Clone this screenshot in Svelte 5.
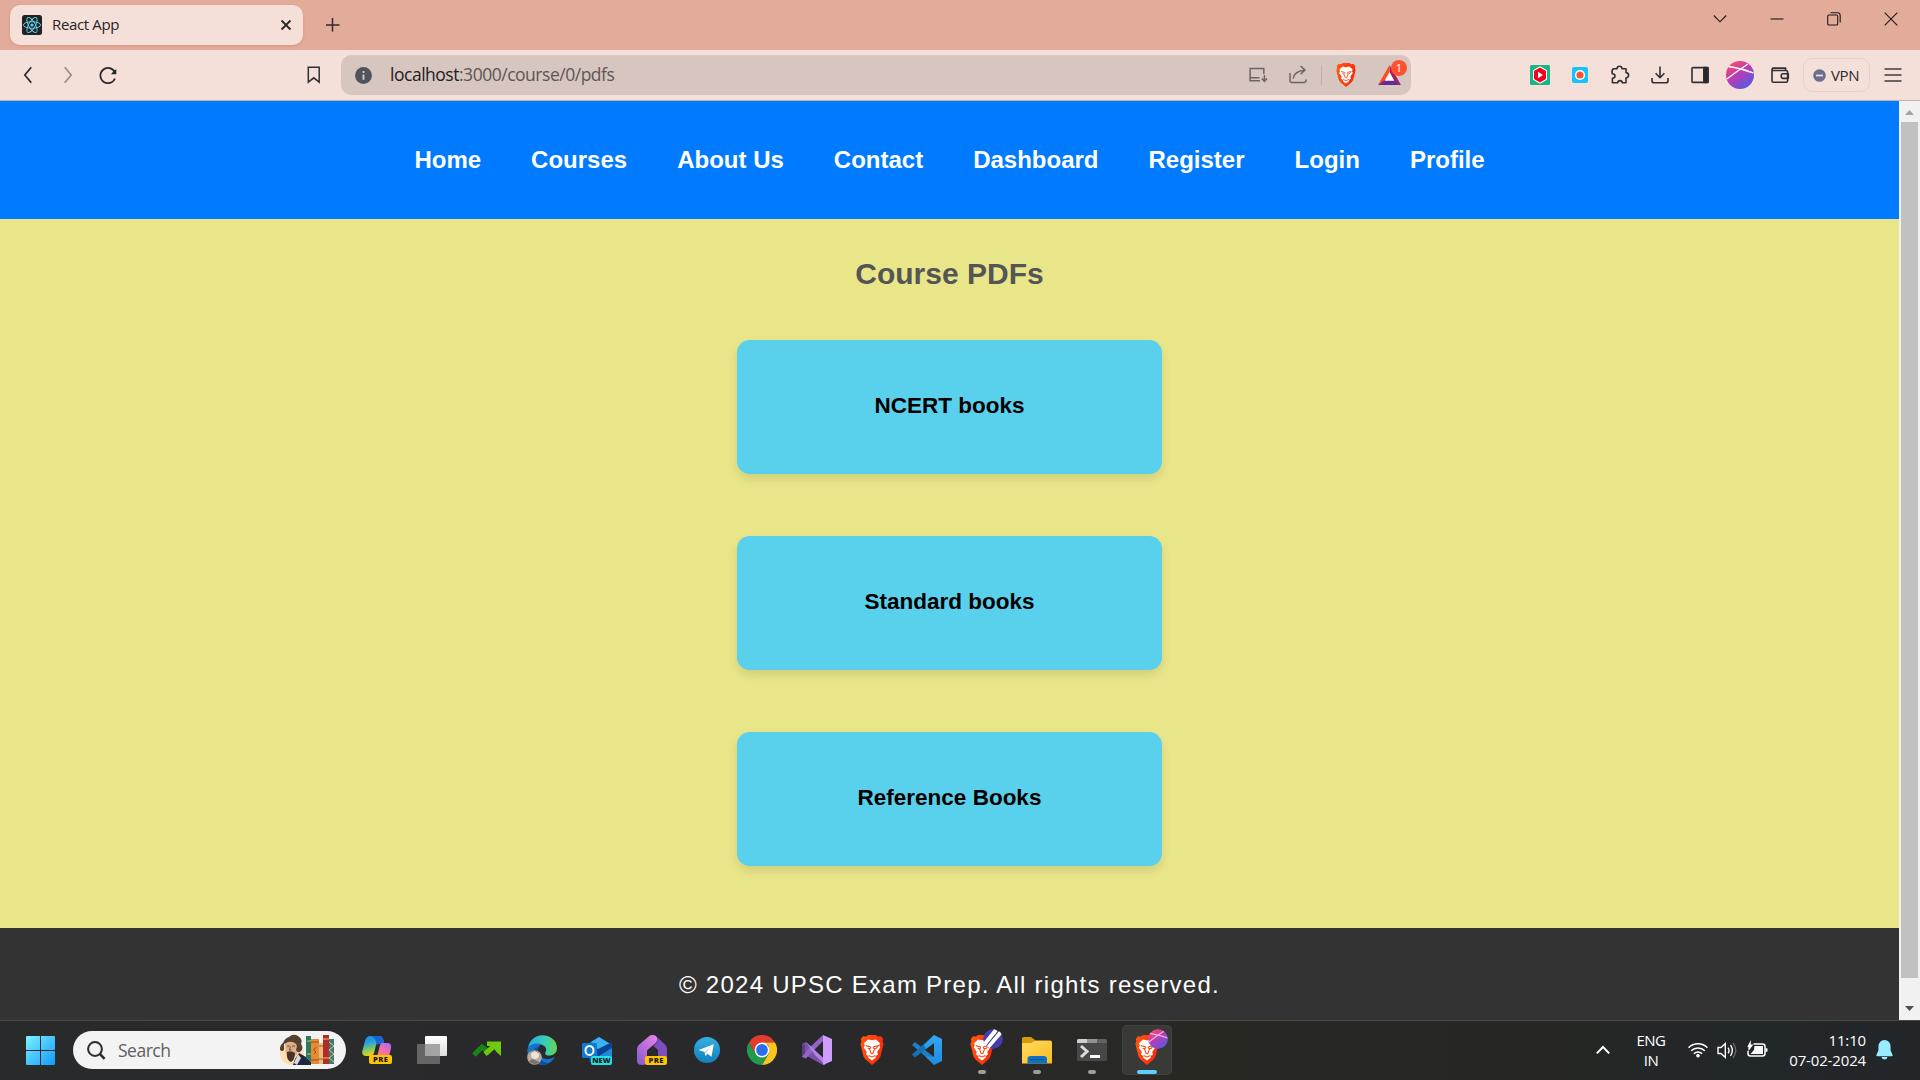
<script lang="ts">
  const links = ['Home', 'Courses', 'About Us', 'Contact', 'Dashboard', 'Register', 'Login', 'Profile'];
  const books = ['NCERT books', 'Standard books', 'Reference Books'];
</script>

{#snippet lion()}
  <path d="M6 1.5 8 0H16L18 1.5 21 1.2 23.2 4 22.6 6.5 23.6 9 20.5 21.5 18.5 24.5 12 30 5.5 24.5 3.5 21.5.4 9 1.4 6.5.8 4 3 1.2Z" fill="url(#lionFill)" />
  <path d="M12 5.2 16 4.5 20 8.2 19.2 10.2 20.2 12.5 17.2 17 18 19.6 15.4 21.2 16 22.6 12 25.6 8 22.6 8.6 21.2 6 19.6 6.8 17 3.8 12.5 4.8 10.2 4 8.2 8 4.5Z" fill="#fff" />
  <path d="M5.8 10.6 10.2 11.8 10.6 12.8 9.6 14.2 10.8 18 12 18.8 13.2 18 14.4 14.2 13.4 12.8 13.8 11.8 18.2 10.6 16.4 13.2 14.6 13.6 M8.6 20.6 12 22 15.4 20.6 M7.6 13.2 9.4 13.6" fill="none" stroke="#fb4b16" stroke-width="1.1" />
{/snippet}

<svg class="defs" width="0" height="0" aria-hidden="true">
  <defs>
    <linearGradient id="lionFill" x2="1" y2=".3"><stop stop-color="#ff5a10" /><stop offset="1" stop-color="#f92b0b" /></linearGradient>
    <linearGradient id="orb" x1=".1" y1="0" x2=".8" y2="1"><stop stop-color="#ff5055" /><stop offset=".45" stop-color="#c13ab6" /><stop offset="1" stop-color="#4a5ee0" /></linearGradient>
    <linearGradient id="win" x2="1" y2="1"><stop stop-color="#7df3ff" /><stop offset="1" stop-color="#1098fb" /></linearGradient>
    <linearGradient id="copA" x2=".3" y2="1"><stop stop-color="#1b86ea" /><stop offset=".4" stop-color="#2aa3d8" /><stop offset=".75" stop-color="#8fd04c" /><stop offset="1" stop-color="#f4c921" /></linearGradient>
    <linearGradient id="copB" x1="1" x2=".2" y2="1"><stop stop-color="#a66bf5" /><stop offset=".5" stop-color="#ef6bb4" /><stop offset="1" stop-color="#ff8d53" /></linearGradient>
    <linearGradient id="edge" x1="0" x2="1"><stop stop-color="#25a9e2" /><stop offset=".6" stop-color="#38cdb8" /><stop offset="1" stop-color="#67d84a" /></linearGradient>
    <linearGradient id="home" x1="1" y1="0" x2=".2" y2="1"><stop stop-color="#e983ea" /><stop offset="1" stop-color="#8f5bd0" /></linearGradient>
    <linearGradient id="tele" x2="0" y2="1"><stop stop-color="#37aee2" /><stop offset="1" stop-color="#1180bd" /></linearGradient>
    <linearGradient id="folder" x2="1" y2="1"><stop stop-color="#ffdc62" /><stop offset="1" stop-color="#fcba1e" /></linearGradient>
    <linearGradient id="pane" x2="0" y2="1"><stop stop-color="#fff" /><stop offset="1" stop-color="#ddd" /></linearGradient>
    <linearGradient id="code" x2="0" y2="1"><stop stop-color="#33a9f2" /><stop offset="1" stop-color="#1c8ce0" /></linearGradient>
  </defs>
</svg>

<div class="screen">
  <div class="tabstrip">
    <div class="tab">
      <svg class="favicon" width="20" height="20" viewBox="0 0 20 20">
        <rect width="20" height="20" rx="2.5" fill="#222" />
        <g fill="none" stroke="#5fd3f3" stroke-width=".9">
          <ellipse cx="10" cy="10" rx="8.6" ry="3.3" />
          <ellipse cx="10" cy="10" rx="8.6" ry="3.3" transform="rotate(60 10 10)" />
          <ellipse cx="10" cy="10" rx="8.6" ry="3.3" transform="rotate(120 10 10)" />
        </g>
        <circle cx="10" cy="10" r="1.6" fill="#5fd3f3" />
      </svg>
      <span class="tabname">React App</span>
      <svg class="tabclose" width="12" height="12" viewBox="0 0 12 12" fill="none" stroke="#2b2526" stroke-width="1.8"><path d="M1.5 1.5 10.5 10.5M10.5 1.5 1.5 10.5" /></svg>
    </div>
    <svg class="plus" width="14" height="14" viewBox="0 0 14 14" fill="none" stroke="#33282a" stroke-width="1.5"><path d="M6.5 0V13.5M0 7H13.5" /></svg>
    <div class="wincontrols">
      <span><svg width="14" height="14" viewBox="0 0 14 14"><path d="M.8 3.5 7 9.8 13.2 3.5" /></svg></span>
      <span><svg width="14" height="14" viewBox="0 0 14 14"><path d="M.5 7H13.5" /></svg></span>
      <span><svg width="14" height="14" viewBox="0 0 14 14"><path d="M1 3H9.5Q10.7 3 10.7 4.2V12Q10.7 13 9.5 13H2Q.7 13 .7 12V4Q.7 3 2 3ZM3.5.7H10.5Q13.2.7 13.2 3.5V10.5" /></svg></span>
      <span><svg width="14" height="14" viewBox="0 0 14 14"><path d="M.7.7 13.3 13.3M13.3.7.7 13.3" /></svg></span>
    </div>
  </div>

  <div class="toolbar">
    <div class="navbuttons">
      <span><svg width="20" height="20" viewBox="0 0 20 20"><path d="M13.3 2.2 6.8 10 13.3 17.8" /></svg></span>
      <span class="dim"><svg width="20" height="20" viewBox="0 0 20 20"><path d="M6.7 2.2 13.2 10 6.7 17.8" /></svg></span>
      <span><svg width="20" height="20" viewBox="0 0 20 20"><path d="M16.8 7.2A7.6 7.6 0 1 0 17 13.5" /><path d="M18.3 4.2V9.2H13Q14.4 6 18.3 4.2Z" fill="#28282a" stroke="none" /></svg></span>
    </div>
    <svg class="bookmark" width="14" height="18" viewBox="0 0 14 18" fill="none" stroke="#303034" stroke-width="1.5"><path d="M1.3 1.2H12.2V16.2L6.8 11.8 1.3 16.2Z" /></svg>
    <div class="address">
      <svg class="info" width="17" height="17" viewBox="0 0 17 17"><circle cx="8.5" cy="8.5" r="8.4" fill="#50535a" /><path d="M8.5 7.4V12.8M8.5 4V6" stroke="#d8c7c0" stroke-width="1.9" /></svg>
      <span class="url">localhost<i>:3000/course/0/pdfs</i></span>
      <div class="addricons">
        <svg width="20" height="20" viewBox="0 0 20 20" fill="none" stroke="#6b6665" stroke-width="1.5"><path d="M15.8 9V3.6H2.1V15.7H12M2.1 12.8H11.5M16.4 10V16M13.8 13.6 16.4 16.3 19 13.6" /></svg>
        <svg width="20" height="20" viewBox="0 0 20 20" fill="none" stroke="#6b6665" stroke-width="1.5"><path d="M2 8V15.4Q2 17.4 4 17.4H16Q18 17.4 18 15.4V14.4M5.2 13.6Q6 6.2 16.6 5.2M12.6 1 17 5.1 12.6 9.2" /></svg>
        <b></b>
        <svg width="20" height="24" viewBox="0 0 24 30" preserveAspectRatio="none">{@render lion()}</svg>
        <div class="bat">
          <svg width="23" height="20" viewBox="0 0 23 20"><path d="M11.5 0 0 20 11.5 13Z" fill="#ff4b1f" /><path d="M11.5 0 23 20 12 13Z" fill="#a32069" /><path d="M0 20H23L16 15H7Z" fill="#662d91" /><path d="M11.5 7 6.7 15.8H16.3Z" fill="#fff" /></svg>
          <em>1</em>
        </div>
      </div>
    </div>
    <div class="extensions">
      <span><svg width="20" height="20" viewBox="0 0 20 20"><rect width="20" height="20" rx="1.5" fill="#18b589" /><path d="M10 1.2 17 5.2V14.8L10 18.8 3 14.8V5.2Z" fill="#fff" /><path d="M10 2.5 16 6V14L10 17.5 4 14V6Z" fill="#f4001d" /><path d="M8 6.8 13 10 8 13.2Z" fill="#fff" /></svg></span>
      <span><svg width="16" height="16" viewBox="0 0 16 16"><rect width="16" height="16" rx="2" fill="#14c4fa" /><circle cx="8" cy="8" r="5.1" fill="#fff" /><circle cx="8" cy="8" r="3.6" fill="#fa5138" /></svg></span>
      <span><svg class="line" width="20" height="20" viewBox="0 0 20 20"><path d="M3.4 3.8H6.9Q7.2 1.2 9.5 1.2T12.1 3.8H16V7.6Q18.6 8 18.6 10.2T16 13V17.8H12.4Q12 15.6 10 15.6T7.6 17.8H2.4V13.3Q5 13 5 10.9T2.2 8.7Q1.4 5 3.4 3.8Z" /></svg></span>
      <span><svg class="line" width="20" height="20" viewBox="0 0 20 20"><path d="M10 1.5V12.5M5.6 8.3 10 12.7 14.4 8.3M2 13V15.8Q2 17.8 4 17.8H16Q18 17.8 18 15.8V13" /></svg></span>
      <span><svg class="line" width="20" height="20" viewBox="0 0 20 20"><rect x="2" y="2.6" width="16" height="14.8" rx="1" /><path d="M13.8 2.6H18V17.4H13.8Z" fill="#25272a" /></svg></span>
      <span><svg width="28" height="28" viewBox="0 0 28 28"><circle cx="14" cy="14" r="14" fill="url(#orb)" /><path d="M2.5 5.5Q14 7 27.5 12M.8 18Q12 9.3 22 3M14 7.8 23.5 11" fill="none" stroke="#fff" stroke-width="1.3" /><path d="M17 8 27 11.8" stroke="#fff" /></svg></span>
      <span><svg class="line" width="20" height="20" viewBox="0 0 20 20"><path d="M2 4.6V16Q2 17.2 3.4 17.2H16.2Q17.6 17.2 17.6 15.9V6.8Q17.6 5.5 16.2 5.5H3Q1.6 4.9 2.6 3.1H15.6V5.3M18.3 8.8H13Q11.2 8.8 11.2 11T13 13.4H18.3Z" /></svg></span>
    </div>
    <div class="vpn">
      <svg width="13" height="13" viewBox="0 0 13 13"><circle cx="6.5" cy="6.5" r="6.3" fill="#6b6f8e" /><path d="M3 6.5H10" stroke="#f5e0d9" stroke-width="1.7" /></svg>
      <span>VPN</span>
    </div>
    <svg class="menu" width="18" height="14" viewBox="0 0 18 14" fill="none" stroke="#403b3d" stroke-width="1.5"><path d="M.5 1H17.5M.5 7H17.5M.5 13H17.5" /></svg>
  </div>

  <div class="viewport">
    <div class="page">
      <nav>
        {#each links as link}<span>{link}</span>{/each}
      </nav>
      <main>
        <h2>Course PDFs</h2>
        {#each books as book}<div class="card">{book}</div>{/each}
      </main>
      <footer>© 2024 UPSC Exam Prep. All rights reserved.</footer>
    </div>
    <div class="scrollbar">
      <svg width="21" height="21" viewBox="0 0 21 21"><path d="M6 14 10.5 9 15 14Z" fill="#a3a3a3" /></svg>
      <div class="thumb"></div>
      <svg class="down" width="21" height="21" viewBox="0 0 21 21"><path d="M6 7 10.5 12 15 7Z" fill="#505050" /></svg>
    </div>
  </div>

  <div class="taskbar">
    <svg class="start" width="29" height="29" viewBox="0 0 29 29"><path d="M1 0H14V14H0V1Q0 0 1 0ZM15 0H28Q29 0 29 1V14H15ZM0 15H14V29H1Q0 29 0 28ZM15 15H29V28Q29 29 28 29H15Z" fill="url(#win)" /></svg>
    <div class="search">
      <svg width="19" height="19" viewBox="0 0 19 19" fill="none" stroke="#2c2c2c" stroke-width="2"><circle cx="8" cy="8" r="6.9" /><path d="M12.8 12.8 17.6 17.8" stroke-width="2.6" /></svg>
      <span>Search</span>
      <svg class="author" width="54" height="32" viewBox="0 0 54 32">
        <ellipse cx="12" cy="20" rx="12" ry="11" fill="#ffdfb0" />
        <path d="M13 31 15 25 19 19 26 23 31 28V31Z" fill="#20283c" />
        <path d="M14 29 18 20 21 24 17 31Z" fill="#d9d9de" />
        <path d="M5 9Q7 4 13 5 19 7 18 14L17 21 11 23 6 20Z" fill="#e2ae86" />
        <path d="M0 16Q-.5 11 3 9 5 4 9 3 13-1 18 2 23 5 21 10 24 14 21 17 18 20 16 16L17 12Q15 7 8 8L4 10 4 16Q2 18 0 16Z" fill="#554031" />
        <path d="M7 18Q11 16 15 19 15 26 11 28 6 26 7 18Z" fill="#46342a" />
        <path d="M7 12H9.5M12 12H15M10.5 12.5 9.5 16H11.5" stroke="#513522" stroke-width=".8" fill="none" />
        <path d="M26 2H31V28L26 24Z" fill="#267c63" /><path d="M27 7H31M27 20H31" stroke="#ddb65f" />
        <rect x="31" y="5" width="8" height="25" fill="#e58a35" /><path d="M31 8H39M31 26H39M36.5 13 33.5 16 36 18 34 20" fill="none" stroke="#9a4c18" />
        <rect x="39" y="9" width="4" height="21" fill="#e7bd78" /><path d="M39 12H43M39 25H43" stroke="#a95428" />
        <rect x="43" y="1" width="6" height="29" fill="#b32b26" /><path d="M43 5H49M43 24H49" stroke="#eebd52" />
        <rect x="49" y="5" width="5" height="25" fill="#3b7c78" /><path d="M49 8 54 12 49 16 54 20 49 24 54 28" fill="none" stroke="#dbc477" />
      </svg>
    </div>
    <div class="apps">
      <span><svg width="30" height="30" viewBox="0 0 30 30">
        <path d="M8 1H17Q20 1 21 4L22 7H18Q15 7 14 10L12 18Q11 21 8 21H4Q-1 21 .6 15L3 6Q4.5 1 8 1Z" fill="url(#copA)" />
        <path d="M9 1H17Q20 1 21 4L22.5 9H17L15 10Q13 2 9 1Z" fill="#1866d6" />
        <path d="M20 8H25Q30 8 29 13L27 22H12Q15 22 16 18L18 10Q18.6 8 20 8Z" fill="url(#copB)" />
        <rect x="7" y="20" width="23" height="9" rx="2" fill="#ffc400" /><text x="18.7" y="27.4" class="pre">PRE</text></svg></span>
      <span><svg width="30" height="30" viewBox="0 0 30 30"><rect x="8" y="1" width="22" height="20" rx="1" fill="url(#pane)" /><rect x="0" y="9" width="23" height="20" rx="1" fill="#707070" opacity=".86" /><path d="M8 9H23V21H8Z" fill="#a4a4a4" /></svg></span>
      <span><svg width="30" height="30" viewBox="0 0 30 30"><path d="M2 20 10 12 18 18" fill="none" stroke="#178517" stroke-width="5" /><path d="M13 19 24 9.5" stroke="#6ec60d" stroke-width="5" /><path d="M15 6.5H29V21L24.5 17 20 11H15Z" fill="#70ca0f" /></svg></span>
      <span><svg width="30" height="30" viewBox="0 0 30 30">
        <path d="M1 13A14.5 14.5 0 0 1 15 .3C24 .3 30 6 30 13 30 19 25 20.5 22 20.5 17 20.5 18 18 19 16 21 10 10 6 1 13Z" fill="url(#edge)" />
        <path d="M.3 15C1 9 10 7 15 9.5 11 10 10 15 12 19 15 25 22 25 28 22 20 36 0 30 .3 15Z" fill="#1672c4" />
        <path d="M12 12C9 18 12 28 22 28 17 31 8 30 6 24 4 17 7 12 12 12Z" fill="#0c4ea3" />
        <circle cx="7.5" cy="22.5" r="7.3" fill="#b5aa9e" /><circle cx="8" cy="20" r="4" fill="#eee3d7" /><path d="M2 27Q4 23 8 25T13 27Q8 31 2 27Z" fill="#7c7167" /><path d="M3 17.5 8 15.6 12 18" fill="none" stroke="#958a7f" />
      </svg></span>
      <span><svg width="30" height="30" viewBox="0 0 30 30"><path d="M6 9 17 2 30 10V27H8Z" fill="#0f6cbd" /><path d="M9 7 17 2 30 10 18 16Z" fill="#37b2f2" /><path d="M14 15 30 7V14L19 21H14Z" fill="#0a4593" /><path d="M17 21 30 13V25H17Z" fill="#2487d8" /><rect y="8" width="15" height="15" rx="1.5" fill="#1279d0" /><ellipse cx="7.5" cy="15.4" rx="4" ry="4.5" fill="none" stroke="#fff" stroke-width="2" /><rect x="9" y="21" width="21" height="9" rx="2" fill="#22e0e8" /><text x="19.5" y="28.4" class="new">NEW</text></svg></span>
      <span><svg width="30" height="30" viewBox="0 0 30 30"><path d="M15 0Q18 0 20 2L28.5 10Q30 11.5 30 14V26H21V15L15 9.5Z" fill="#7d4fbd" /><path d="M15 9.5 20 3Q22 6 17 12Z" fill="#5b3a93" /><path d="M12 1.2Q15-1 18.5.8 22 4 18.5 8L10 15.5V26Q10 30 5 30 0 30 0 26V14Q0 11.5 2 9.8Z" fill="url(#home)" /><rect x="8" y="21" width="22" height="9" rx="2" fill="#ffc400" /><text x="19.2" y="28.4" class="pre">PRE</text></svg></span>
      <span><svg width="30" height="30" viewBox="0 0 30 30"><circle cx="15" cy="15" r="13" fill="url(#tele)" /><path d="M6.5 15 21.8 9.2 19.4 21.7 15.5 18.8 13.2 21 12.7 17Z" fill="#fff" /><path d="M12.7 17 19 11.8 14 18Z" fill="#b7d5e7" /></svg></span>
      <span><svg width="30" height="30" viewBox="0 0 30 30"><path d="M2 7.5A15 15 0 0 1 28 7.5H15L8.5 18.7Z" fill="#e33b2e" /><path d="M28 7.5A15 15 0 0 1 15 30L21.5 18.7Q23 14 21 10L15 7.5Z" fill="#fcc31e" /><path d="M15 30A15 15 0 0 1 2 7.5L8.5 18.7 15 22.5 21.5 18.7Z" fill="#229a49" /><circle cx="15" cy="15" r="7.4" fill="#fff" /><circle cx="15" cy="15" r="5.9" fill="#2a6eee" /></svg></span>
      <span><svg width="30" height="30" viewBox="0 0 30 30"><path d="M0 9 4 7 21 25V30L4 20.5 0 22Z" fill="#7a50a9" /><path d="M0 9 3 10V20L0 22Z" fill="#5b3d85" /><path d="M0 22 4 23.5 10 17 21 6V0L7 13Z" fill="#9166c6" /><path d="M4 7 23 24.5V30L13 20Z" fill="#b183e4" /><path d="M21 0 30 4V26L21 30Z" fill="#cf9cff" /></svg></span>
      <span><svg width="24" height="30" viewBox="0 0 24 30">{@render lion()}</svg></span>
      <span><svg width="30" height="30" viewBox="0 0 30 30"><path d="M0 10 3 7 22 22V29Z" fill="#1f7fc5" /><path d="M0 19.5 3 22.5 22 8V0Z" fill="#1272b8" /><path d="M22 0 30 4V26L22 30 13.5 21.5 22 22V8L14 14 12 10Z" fill="url(#code)" /></svg></span>
      <span class="running"><svg width="24" height="30" viewBox="0 0 24 30">{@render lion()}</svg>
        <svg class="profile" width="20" height="20" viewBox="0 0 20 20"><circle cx="10" cy="10" r="10" fill="#433eb0" /><path d="M1 16 13 1M5 18 18 3M0 13 2.5 19" stroke="#fff" stroke-width="4" /><path d="M3 17.5 15.5 2" stroke="#51459b" stroke-width="1" /></svg></span>
      <span class="running"><svg width="30" height="30" viewBox="0 0 30 30"><path d="M0 4Q0 2 2 2H9L13 5 10 9H0Z" fill="#d99a08" /><path d="M0 8H9L13 5.5H28Q30 5.5 30 7.5V28.5H0Z" fill="url(#folder)" /><path d="M5.5 24Q5.5 21 8.5 21H22Q25 21 25 24V28.5H5.5Z" fill="#0d72c4" /><path d="M8.5 24.6H22" stroke="#064888" /></svg></span>
      <span class="running"><svg width="30" height="30" viewBox="0 0 30 30"><rect y="4" width="30" height="22" rx="1.5" fill="#484848" /><path d="M1.5 4H10V8H0V5.5Q0 4 1.5 4Z" fill="#cfcfcf" /><path d="M10 4H20V8H10Z" fill="#929292" /><path d="M20 4H28.5Q30 4 30 5.5V8H20Z" fill="#626262" /><path d="M4 11 10 16.5 4 22" fill="none" stroke="#ddd" stroke-width="3" /><path d="M13 21.5H23" stroke="#fff" stroke-width="3" /></svg></span>
      <span class="running active"><svg width="24" height="30" viewBox="0 0 24 30">{@render lion()}</svg>
        <svg class="profile" width="20" height="20" viewBox="0 0 28 28"><circle cx="14" cy="14" r="14" fill="url(#orb)" /><path d="M2 6Q14 7.4 27.5 12.4M.8 18.5Q12 9.8 22 3.2" fill="none" stroke="#fff" stroke-opacity=".6" stroke-width="1.8" /></svg></span>
    </div>
    <div class="tray">
      <svg class="chev" width="14" height="10" viewBox="0 0 14 10" fill="none" stroke="#fff" stroke-width="2"><path d="M.8 8.4 7 2 13.2 8.4" /></svg>
      <div class="lang"><span>ENG</span><span>IN</span></div>
      <svg class="wifi" width="20" height="16" viewBox="0 0 20 16" fill="none" stroke="#fff" stroke-width="1.5"><path d="M.6 5.8A13.2 13.2 0 0 1 19.4 5.8M3.2 8.8A9.6 9.6 0 0 1 16.8 8.8M5.8 11.7A5.9 5.9 0 0 1 14.2 11.7" /><circle cx="10" cy="13.7" r="1.4" fill="#fff" stroke-width="1" /></svg>
      <svg class="sound" width="21" height="17" viewBox="0 0 21 17" fill="none" stroke="#fff" stroke-width="1.4"><path d="M1 5.5H4L8.3 1.6V15.4L4 11.5H1ZM11 5.6Q13.2 8.5 11 11.4M13.5 3.2Q17.3 8.5 13.5 13.8" /><path d="M16 1Q21.6 8.5 16 16" stroke="#666" /></svg>
      <svg class="battery" width="21" height="18" viewBox="0 0 21 18"><path d="M6.5 4H15.5Q18 4 18 6.5V13.5Q18 16 15.5 16H3.5Q1 16 1 13.5V11" fill="none" stroke="#fff" stroke-width="1.5" /><path d="M7.5 6H16V14H3.5L7 10Z" fill="#fff" /><path d="M18.5 8 20.5 8.6V11.4L18.5 12Z" fill="#fff" /><path d="M3.8 0V4.5H6.3L1.4 11.2V7H.3Z" fill="#fff" /></svg>
      <div class="clock"><span>11:10</span><span>07-02-2024</span></div>
      <svg class="bell" width="17" height="20" viewBox="0 0 17 20" fill="#99ebff"><path d="M8.5 0Q14 0 14.6 6.5V10.5L16.6 15Q17 16.2 15.8 16.2H1.2Q0 16.2.4 15L2.4 10.5V6.5Q3 0 8.5 0ZM5.5 17H11.5Q11 19.5 8.5 19.5T5.5 17Z" /></svg>
    </div>
  </div>
</div>

<style>
  :global(body) { margin: 0; overflow: hidden; }
  .defs { position: absolute; }
  svg { display: block; flex: none; }
  .screen { width: 1920px; height: 1080px; display: flex; flex-direction: column; font-family: 'Open Sans', 'Noto Sans', sans-serif; white-space: nowrap; overflow: hidden; }

  .tabstrip { height: 50px; flex: none; background: #e3ab99; display: flex; align-items: flex-start; box-sizing: border-box; padding-left: 10px; }
  .tab { margin-top: 5px; width: 293px; height: 40px; box-sizing: border-box; padding: 0 11px 0 12px; display: flex; align-items: center; background: #f5e0d9; border-radius: 10px; box-shadow: 0 1px 3px rgb(120 50 30 / 0.15); }
  .tabname { flex: 1; margin-left: 10px; padding-bottom: 2px; font-size: 15px; letter-spacing: -0.35px; color: #2a2224; }
  .plus { margin: 18px 0 0 23px; }
  .wincontrols { margin-left: auto; display: flex; height: 37px; }
  .wincontrols span { width: 57.2px; display: flex; align-items: center; justify-content: center; }
  .wincontrols svg { fill: none; stroke: #201a1a; stroke-width: 1.1; }

  .toolbar { height: 51px; flex: none; box-sizing: border-box; border-bottom: 1px solid #c5b2ac; background: #f5e0d9; display: flex; align-items: center; }
  .navbuttons { display: flex; padding-left: 8px; width: 299px; }
  .navbuttons span { width: 40px; display: flex; justify-content: center; }
  .navbuttons svg { fill: none; stroke: #28282a; stroke-width: 1.7; }
  .navbuttons .dim { opacity: 0.45; }
  .bookmark { margin-right: 20px; }
  .address { width: 1070px; height: 40px; box-sizing: border-box; padding: 0 10px 0 14px; border-radius: 10px; background: #d7c5bf; display: flex; align-items: center; }
  .url { flex: 1; margin-left: 18px; padding-bottom: 2px; font-size: 17.5px; letter-spacing: -0.48px; color: #222023; }
  .url i { font-style: normal; color: #5d5656; }
  .addricons { display: flex; align-items: center; }
  .addricons > svg:nth-child(2) { margin-left: 20px; }
  .addricons b { width: 1px; height: 20px; margin: 0 14px 0 13px; background: #bdb0b0; }
  .bat { position: relative; margin-left: 22px; }
  .bat em { position: absolute; left: 13px; top: -5px; width: 16px; height: 16px; border-radius: 50%; background: #ff5330; color: #fff; font: 11px/16px 'Open Sans', sans-serif; text-align: center; }
  .extensions { display: flex; margin-left: 109px; }
  .extensions span { width: 40px; height: 30px; display: flex; align-items: center; justify-content: center; }
  .line { fill: none; stroke: #303034; stroke-width: 1.6; stroke-linejoin: round; }
  .vpn { margin-left: 3px; width: 67px; height: 34px; box-sizing: border-box; border: 1px solid #e6d1cb; border-radius: 9px; display: flex; align-items: center; padding-left: 9px; }
  .vpn span { margin-left: 5px; padding-bottom: 1px; font-size: 15px; letter-spacing: -0.4px; color: #28282a; }
  .menu { margin-left: 14px; }

  .viewport { height: 919px; flex: none; display: flex; font-family: 'Liberation Sans', Arial, sans-serif; }
  .page { width: 1899px; display: flex; flex-direction: column; }
  nav { height: 118px; flex: none; background: #007bff; display: flex; align-items: center; justify-content: center; gap: 50px; color: #fff; font-size: 24px; font-weight: bold; }
  main { height: 709px; flex: none; background: #e9e68a; display: flex; flex-direction: column; align-items: center; }
  h2 { margin: 38px 0 49px; font-size: 30px; line-height: 34px; color: #555; }
  .card { width: 425px; height: 134px; margin-bottom: 62px; box-sizing: border-box; padding-bottom: 2px; display: flex; align-items: center; justify-content: center; border-radius: 12.5px; background: #5ad1ec; box-shadow: 0 5px 10px rgb(0 0 0 / 0.1); font-size: 22.5px; font-weight: bold; color: #000; }
  footer { flex: 1; box-sizing: border-box; padding-top: 42px; background: #333; color: #fff; text-align: center; font-size: 24px; line-height: 29px; letter-spacing: 1.25px; }
  .scrollbar { width: 21px; background: #f1f1f1; }
  .thumb { width: 17px; height: 856px; margin-left: 2px; background: #c1c1c1; }
  .down { margin-top: 21px; }

  .taskbar { height: 60px; flex: none; box-sizing: border-box; padding-bottom: 1px; border-top: 1px solid #494949; background: linear-gradient(90deg, #292a2c 0%, #29292b 45%, #282823 62%, #262723 80%, #22272a 90%, #222628 100%); display: flex; align-items: center; color: #fff; }
  .start { margin-left: 26px; }
  .search { margin-left: 18px; width: 273px; height: 38px; box-sizing: border-box; padding: 0 12px 0 14px; border-radius: 19px; background: #f3f3f3; display: flex; align-items: center; }
  .search span { flex: 1; margin-left: 12px; font-size: 17.5px; letter-spacing: -0.5px; color: #606060; }
  .apps { display: flex; align-items: center; margin-left: 6px; }
  .apps > span { width: 50px; height: 50px; margin: 0 2.5px; box-sizing: border-box; position: relative; display: flex; align-items: center; justify-content: center; border-radius: 5px; }
  .apps > span:first-child { margin-left: 0; }
  .running::after { content: ''; position: absolute; left: 21px; top: 45px; width: 8px; height: 4px; border-radius: 2px; background: #9d9d9d; }
  .active { background: #393936; box-shadow: inset 0 0 0 1px #41413e; }
  .active::after { left: 15px; width: 20px; background: #60cdff; }
  .profile { position: absolute; left: 26px; top: 4px; border-radius: 50%; }
  .pre, .new { font: 800 7.6px 'Open Sans', sans-serif; text-anchor: middle; fill: #1a1a1a; letter-spacing: 0.5px; }
  .new { letter-spacing: 0.1px; }
  .tray { margin-left: auto; display: flex; align-items: center; font-size: 15px; line-height: 20px; }
  .lang, .clock { display: flex; flex-direction: column; padding-bottom: 1px; }
  .lang { align-items: center; width: 40px; margin-left: 21px; letter-spacing: -0.5px; }
  .clock { align-items: flex-end; width: 84px; margin: 0 10px 0 14px; letter-spacing: -0.15px; }
  .wifi { margin-left: 17px; }
  .sound { margin-left: 9px; }
  .battery { margin: -3px 0 0 9px; }
  .bell { margin-right: 27px; }
</style>
